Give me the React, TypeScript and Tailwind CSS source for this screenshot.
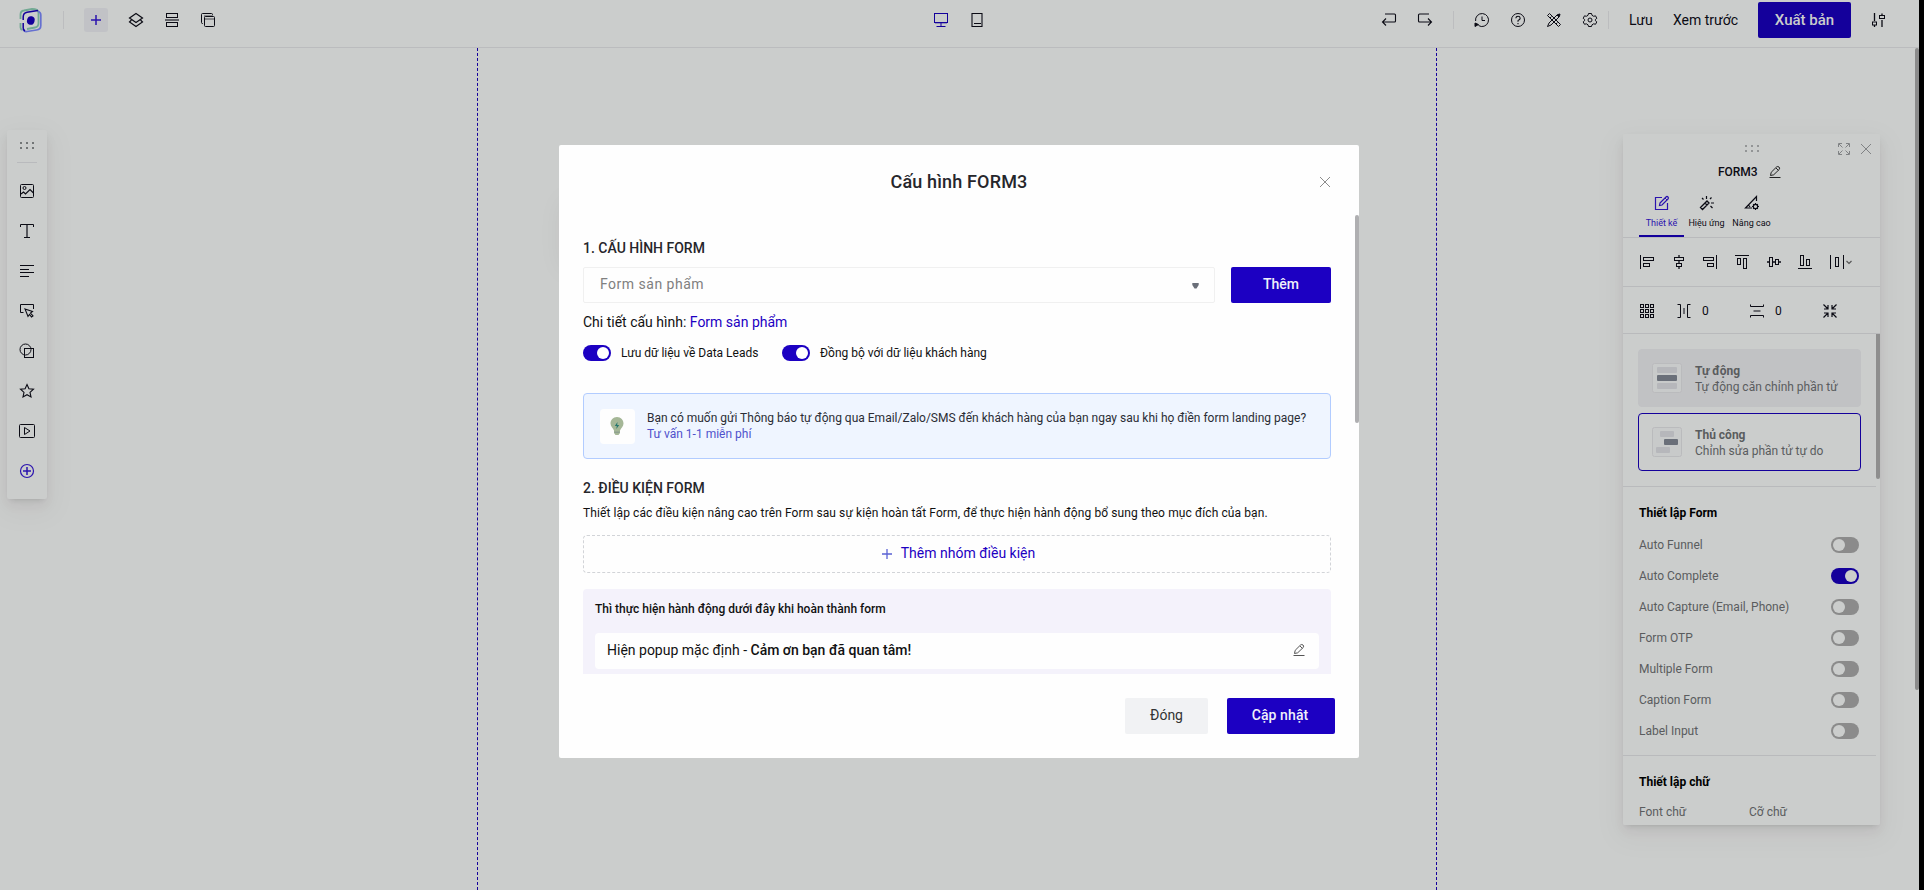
import React from "react";

type IconProps = { children: React.ReactNode; className?: string; size?: number };

function Icon({ children, className = "", size = 16 }: IconProps) {
  return (
    <svg
      width={size}
      height={size}
      viewBox={`0 0 ${size} ${size}`}
      fill="none"
      stroke="currentColor"
      strokeWidth={1}
      className={`block shrink-0 ${className}`}
    >
      {children}
    </svg>
  );
}

const Logo = () => (
  <svg width="24" height="26" viewBox="0 0 24 26" fill="none" className="block shrink-0">
    <path d="M2.500 12V7.500Q2.500 4 6 3.500L14 2Q20 2 20.500 5.500V16Q20.500 20 17 20.500L9 22" stroke="#72a993" strokeWidth="1.800" />
    <path d="M2.500 16V20.500Q2.500 22.500 4.500 23" stroke="#72a993" strokeWidth="1.800" />
    <path d="M5.500 22Q5.500 25 9 24.500L18.500 23Q22.800 22.500 22.800 18.500V8Q22.800 5 20 4.200" stroke="#6670d0" strokeWidth="1.700" />
    <path d="M20 3.500L9 5.200Q5.200 6 5.200 10V13M5.200 16V21Q5.200 23 7 24" stroke="#14009b" strokeWidth="1.500" />
    <ellipse cx="12.800" cy="13.500" rx="3.800" ry="4.300" fill="#14009b" transform="rotate(15 12.800 13.500)" />
  </svg>
);

const Layers = () => (
  <Icon>
    <path d="M8 1.500L14.500 6L8 10.500L1.500 6Z" strokeWidth="1.200" />
    <path d="M3.500 8L1.500 10L8 14.500L14.500 10L12.500 8" strokeWidth="1.200" />
  </Icon>
);
const Sections = () => (
  <Icon>
    <rect x="2.500" y="1.500" width="11" height="4" />
    <path d="M1 8H15" strokeWidth="2" strokeOpacity=".55" />
    <rect x="2.500" y="10.500" width="11" height="4" />
  </Icon>
);
const Windows = () => (
  <Icon>
    <path d="M3 11.500H2.500Q1.500 11.500 1.500 10.500V2.500Q1.500 1.500 2.500 1.500H11.500Q12.500 1.500 12.500 2.500V3" />
    <rect x="4.500" y="4.500" width="10" height="10" rx="1" />
    <path d="M4 7H14.500" strokeOpacity=".7" />
    <path d="M4 4H13" strokeOpacity=".7" />
  </Icon>
);
const Monitor = () => (
  <Icon>
    <rect x="1.500" y="1.500" width="13" height="9" />
    <path d="M8 11V14M3.500 14.500H12.500" />
    <path d="M2 11.500H14" strokeOpacity=".3" />
  </Icon>
);
const Tablet = () => (
  <Icon>
    <path d="M3 1V15M13 1V15" strokeWidth="2" strokeOpacity=".55" />
    <path d="M3 1.500H13M3 14.500H13M5 11.500H12" />
  </Icon>
);
const Undo = () => (
  <Icon>
    <path d="M4 2H13.500Q14.500 2 14.500 3V9Q14.500 10 13.500 10H1.500M5 6.500L1.500 10L5 13.500" strokeWidth="1.100" />
  </Icon>
);
const Redo = () => (
  <Icon>
    <path d="M12 2H2.500Q1.500 2 1.500 3V9Q1.500 10 2.500 10H14.500M11 6.500L14.500 10L11 13.500" strokeWidth="1.100" />
  </Icon>
);
const History = () => (
  <Icon>
    <path d="M1.600 9A6.500 6.500 0 1 1 4.500 13.500" />
    <path d="M1 14.500V11L4.500 12.500Z" fill="currentColor" />
    <path d="M8 4.500V8.500H11" />
  </Icon>
);
const Help = () => (
  <Icon>
    <circle cx="8" cy="8" r="6.500" />
    <path d="M5.800 6.300Q6 4.300 8 4.300T10.200 6.200Q10.200 7.300 8 8.600V9.800M8 11V12.200" strokeWidth="1.100" />
  </Icon>
);
const Tools = () => (
  <Icon>
    <path d="M1.500 3.500L3.500 1.500L14.500 12.500L12.500 14.500Z" />
    <path d="M11 3L13 5L5 13L1.500 14.500L3 11Z" />
    <path d="M12 2.500L14 2L13.500 4L13 5L11 3Z" fill="currentColor" />
    <path d="M4 6L5.500 4.500M10 12L11.500 10.500" />
  </Icon>
);
const Gear = () => (
  <Icon>
    <path d="M6.500 1.500H9.500L10 3.300L11.700 4.300L13.500 3.800L14.800 6.300L13.400 7.500V8.700L14.800 9.900L13.500 12.300L11.700 11.800L10 12.800L9.500 14.500H6.500L6 12.800L4.300 11.800L2.500 12.300L1.200 9.900L2.600 8.700V7.500L1.200 6.300L2.500 3.800L4.300 4.300L6 3.300Z" />
    <circle cx="8" cy="8" r="2" />
  </Icon>
);
const Tuner = () => (
  <Icon>
    <path d="M4.500 1V9M12 3V1.500M12 8V15M4.500 13V15" strokeWidth="1.300" />
    <rect x="2.500" y="10" width="4" height="3" />
    <rect x="9.500" y="3.500" width="5" height="3" />
  </Icon>
);
const ImageIcon = () => (
  <Icon>
    <rect x="1.500" y="1.500" width="13" height="13" rx="1" />
    <circle cx="5.500" cy="5" r="1.500" />
    <path d="M2 11L4.500 9L6.500 11L11 6.500L14.500 10" strokeWidth="1.200" />
  </Icon>
);
const TextIcon = () => (
  <Icon>
    <path d="M1.500 4V1.500H14.500V4M5 14.500H11" />
    <path d="M8 2V14" strokeWidth="2" strokeOpacity=".6" />
  </Icon>
);
const Paragraph = () => (
  <Icon>
    <path d="M1 2.500H15M1 6.500H10M1 9.500H15M1 13.500H10" />
  </Icon>
);
const ButtonIcon = () => (
  <Icon>
    <path d="M4.500 9.500H1.500V1.500H14.500V6" />
    <path d="M6 6L13.500 8.500L11.500 10L14 13L12.500 14L10.500 11.500L9 13.500Z" strokeWidth="1.100" />
  </Icon>
);
const Shapes = () => (
  <Icon>
    <circle cx="6.500" cy="6.500" r="5.500" />
    <rect x="5.500" y="5.500" width="9" height="9" />
  </Icon>
);
const StarIcon = () => (
  <Icon>
    <path d="M8 1.500L9.900 5.800L14.500 6.200L11 9.400L12 14L8 11.700L4 14L5 9.400L1.500 6.200L6.100 5.800Z" strokeWidth="1.100" />
  </Icon>
);
const VideoIcon = () => (
  <Icon>
    <rect x=".5" y="1.500" width="15" height="13" rx="1" />
    <path d="M5.500 4.500L11 8L5.500 11.500Z" />
  </Icon>
);
const AddCircle = () => (
  <Icon>
    <circle cx="8" cy="8" r="6.500" strokeWidth="1.200" />
    <path d="M8 4V12M4 8H12" strokeWidth="1.500" />
  </Icon>
);
const Pencil = () => (
  <Icon size={14}>
    <path d="M3.200 7.300L8.500 2Q9.800 1 11 2T11.200 4.500L5.700 9.800L2.500 10.500ZM8 3L10.300 5.300" />
    <path d="M1.500 12.500H12.500" />
  </Icon>
);
const DesignIcon = () => (
  <Icon>
    <path d="M8 2.500H1.500V14.500H13.500V8" strokeWidth="1.200" />
    <path d="M6 8L12 2Q13 1 14 2T14 4L8 10L5.500 10.500Z" strokeWidth="1.200" />
    <path d="M11 3L13 5" />
  </Icon>
);
const WandIcon = () => (
  <Icon>
    <path d="M1.500 12.500L8 6L10 8L3.500 14.500ZM6 8L8 10" strokeWidth="1.300" />
    <path d="M7.500 1V4M12.500 2.500L11 4M3 3L4.500 4.500M12 8H15M11.500 11L13.500 13" strokeWidth="1.200" />
  </Icon>
);
const AdvancedIcon = () => (
  <Icon>
    <path d="M8 13H1.500L12.500 1.500V6M4.500 10L6 12" strokeWidth="1.200" />
    <circle cx="11.500" cy="11.500" r="2.200" strokeWidth="1.200" />
    <path d="M11.500 8V9.500M11.500 13.500V15M8 11.500H9.300M13.700 11.500H15M9.200 9.200L10 10M13.800 9.200L13 10M9.200 13.800L10 13M13.800 13.800L13 13" strokeWidth="1.200" />
  </Icon>
);

const AlignLeft = () => (
  <Icon>
    <path d="M1.500 1V15" />
    <rect x="4.500" y="3.500" width="10" height="3" />
    <rect x="4.500" y="9.500" width="6" height="3" />
  </Icon>
);
const AlignCenterH = () => (
  <Icon>
    <path d="M8 1V4M8 6V10M8 12V15" strokeWidth="1.300" />
    <rect x="3.500" y="3.500" width="9" height="3" />
    <rect x="5.500" y="9.500" width="5" height="3" />
  </Icon>
);
const AlignRight = () => (
  <Icon>
    <path d="M14.500 1V15" />
    <rect x="1.500" y="3.500" width="10" height="3" />
    <rect x="5.500" y="9.500" width="6" height="3" />
  </Icon>
);
const AlignTop = () => (
  <Icon>
    <path d="M1 1.500H15" />
    <rect x="3.500" y="4.500" width="3" height="6" />
    <rect x="9.500" y="4.500" width="3" height="10" />
  </Icon>
);
const AlignMiddle = () => (
  <Icon>
    <path d="M1 8H4M6 8H10M12 8H15" strokeWidth="1.300" />
    <rect x="3.500" y="3.500" width="3" height="9" />
    <rect x="9.500" y="5.500" width="3" height="5" />
  </Icon>
);
const AlignBottom = () => (
  <Icon>
    <path d="M1 14.500H15" />
    <rect x="3.500" y="1.500" width="3" height="10" />
    <rect x="9.500" y="5.500" width="3" height="6" />
  </Icon>
);
const Distribute = () => (
  <Icon>
    <path d="M1.500 1V15M14.500 1V15" />
    <rect x="6.500" y="3.500" width="3" height="9" />
  </Icon>
);
const GridIcon = () => (
  <Icon>
    {[1.5, 6.5, 11.5].map((y) =>
      [1.5, 6.5, 11.5].map((x) => <rect key={`${x}-${y}`} x={x} y={y} width="3" height="3" />)
    )}
  </Icon>
);
const GapH = () => (
  <Icon>
    <path d="M1.500 1.500H4.500V14.500H1.500M14.500 1.500H11.500V14.500H14.500M8 5V11" />
  </Icon>
);
const GapV = () => (
  <Icon>
    <path d="M1.500 1.500V3.500H14.500V1.500M1.500 14.500V12.500H14.500V14.500M4.500 8H11.500" />
  </Icon>
);
const Collapse = () => (
  <Icon>
    <path
      d="M1.500 1.500L6 6M6 2V6H2M14.500 1.500L10 6M10 2V6H14M1.500 14.500L6 10M6 14V10H2M14.500 14.500L10 10M10 14V10H14"
      strokeWidth="1.200"
    />
  </Icon>
);
const Expand = () => (
  <Icon size={12}>
    <path d="M.5 4V.5H4M1 1L4.500 4.500M8 .5H11.500V4M11 1L7.500 4.500M.5 8V11.500H4M1 11L4.500 7.500M8 11.500H11.500V8M11 11L7.500 7.500" />
  </Icon>
);
const Close = () => (
  <Icon size={12}>
    <path d="M1 1L11 11M11 1L1 11" />
  </Icon>
);

function DragDots() {
  return (
    <div className="grid w-[14px] grid-cols-3 gap-x-1 gap-y-[3px]">
      {[0, 1, 2, 3, 4, 5].map((i) => (
        <span key={i} className="size-[2px] rounded-[1px] bg-current" />
      ))}
    </div>
  );
}

function Toggle({ on = false, dim = false }: { on?: boolean; dim?: boolean }) {
  const track = on ? (dim ? "bg-[#14009b] justify-end" : "bg-[#1c00c2] justify-end") : "bg-[#8b8b8b] justify-start";
  return (
    <span className={`flex h-4 w-7 shrink-0 items-center rounded-full px-[2px] ${track}`}>
      <span className={`size-3 rounded-full ${dim ? "bg-[#cbcdcc]" : "bg-white"}`} />
    </span>
  );
}

const Divider = () => <span className="h-[18px] w-px shrink-0 bg-[#bcbdbf]" />;

function TopBar() {
  return (
    <header className="flex h-12 items-start border-b border-[#bbbcbe] text-[#0b0b14]">
      <div className="flex h-10 w-[940px] items-center pl-[18px]">
        <Logo />
        <span className="w-[21px]" />
        <Divider />
        <div className="ml-5 flex items-center gap-5">
          <span className="flex size-6 items-center justify-center rounded-[3px] bg-[#c1c2c6] text-[#2b13ae]">
            <Icon size={10}>
              <path d="M5 0V10M0 5H10" strokeWidth="1.500" />
            </Icon>
          </span>
          <Layers />
          <Sections />
          <Windows />
        </div>
      </div>
      <div className="-ml-[7px] flex h-10 w-[448px] items-center gap-5">
        <span className="text-[#14009b]">
          <Monitor />
        </span>
        <Tablet />
      </div>
      <div className="flex h-10 items-center">
        <div className="flex items-center gap-5">
          <Undo />
          <Redo />
          <Divider />
          <History />
          <Help />
          <Tools />
          <Gear />
        </div>
        <span className="w-[10px]" />
        <Divider />
        <span className="ml-[20px] w-[44px] pb-px text-sm">Lưu</span>
        <span className="w-[85px] pb-px text-sm">Xem trước</span>
        <span className="flex h-9 w-[93px] items-center justify-center rounded-[2px] bg-[#14009b] text-[15px] font-medium text-[#cbcdcc]">
          Xuất bản
        </span>
        <span className="ml-[19px]">
          <Tuner />
        </span>
      </div>
    </header>
  );
}

function ToolRail() {
  return (
    <aside className="absolute left-[7px] top-[130px] flex h-[369px] w-10 flex-col items-center rounded-[2px] bg-[#cbcdcc] pt-[12px] text-[#0b0b14] shadow-[0_3px_6px_-4px_rgba(0,0,0,0.2),0_6px_12px_0_rgba(0,0,0,0.06),0_9px_28px_8px_rgba(60,0,20,0.03)]">
      <span className="text-[#55575a]">
        <DragDots />
      </span>
      <span className="mt-[13px] h-px w-5 bg-[#b9babd]" />
      <div className="mt-5 flex flex-col gap-6">
        <ImageIcon />
        <TextIcon />
        <Paragraph />
        <ButtonIcon />
        <Shapes />
        <StarIcon />
        <VideoIcon />
        <span className="text-[#2b13ae]">
          <AddCircle />
        </span>
      </div>
    </aside>
  );
}

const formSettings = [
  { label: "Auto Funnel", on: false },
  { label: "Auto Complete", on: true },
  { label: "Auto Capture (Email, Phone)", on: false },
  { label: "Form OTP", on: false },
  { label: "Multiple Form", on: false },
  { label: "Caption Form", on: false },
  { label: "Label Input", on: false },
];

function ModeCard({ title, text, manual = false }: { title: string; text: string; manual?: boolean }) {
  return (
    <div
      className={`flex h-[58px] w-[223px] items-center rounded border pl-[13px] ${
        manual ? "border-[#14009b]" : "border-[#c1c2c4] bg-[#c1c2c4]"
      }`}
    >
      <svg width="30" height="30" viewBox="0 0 30 30" fill="none" className="shrink-0">
        <rect x=".5" y=".5" width="29" height="29" rx="2" stroke="#babbbd" fill="#c8caca" />
        {manual ? (
          <>
            <rect x="8" y="4" width="14" height="6" rx="1" fill="#b6b7bb" />
            <rect x="12" y="12" width="14" height="6" rx="1" fill="#6a6f79" />
            <rect x="4" y="20" width="14" height="6" rx="1" fill="#b6b7bb" />
          </>
        ) : (
          <>
            <rect x="5" y="4" width="20" height="6" rx="1" fill="#b6b7bb" />
            <rect x="5" y="12" width="20" height="6" rx="1" fill="#6a6f79" />
            <rect x="5" y="20" width="20" height="6" rx="1" fill="#b6b7bb" />
          </>
        )}
      </svg>
      <div className="ml-[13px] pt-[2px] text-xs leading-4 text-[#5a5c5e]">
        <div className="font-bold">{title}</div>
        <div>{text}</div>
      </div>
    </div>
  );
}

function PropertiesPanel() {
  return (
    <aside className="absolute left-[1623px] top-[134px] flex h-[691px] w-[257px] flex-col overflow-hidden rounded-[2px] bg-[#cbcdcc] text-[#0b0b14]">
      <div className="flex h-[29px] items-center">
        <div className="ml-[122px] text-[#808284]">
          <DragDots />
        </div>
        <div className="ml-[79px] flex items-center gap-[10px] text-[#808284]">
          <Expand />
          <Close />
        </div>
      </div>
      <div className="flex h-[18px] items-center pl-[95px]">
        <span className="w-[50px] text-xs font-medium tracking-[-0.05px]">FORM3</span>
        <span className="text-[#222]">
          <Pencil />
        </span>
      </div>
      <nav className="flex h-[57px] border-b border-[#b9babc] pl-4 text-[9px] leading-3">
        <div className="flex w-[45px] flex-col items-center border-b-2 border-[#14009b] pt-[14px] text-[#2b13ae]">
          <DesignIcon />
          <span className="mt-[6px] whitespace-nowrap">Thiết kế</span>
        </div>
        <div className="flex w-[45px] flex-col items-center pt-[14px]">
          <WandIcon />
          <span className="mt-[6px] whitespace-nowrap">Hiệu ứng</span>
        </div>
        <div className="flex w-[45px] flex-col items-center pt-[14px]">
          <AdvancedIcon />
          <span className="mt-[6px] whitespace-nowrap">Nâng cao</span>
        </div>
      </nav>
      <div className="flex h-[49px] items-center justify-between border-b border-[#b9babc] pl-4 pr-[27px]">
        <AlignLeft />
        <AlignCenterH />
        <AlignRight />
        <AlignTop />
        <AlignMiddle />
        <AlignBottom />
        <span className="flex items-center">
          <Distribute />
          <Icon size={8} className="text-[#555]">
            <path d="M1.500 3L4 5.500L6.500 3" strokeWidth="1.200" />
          </Icon>
        </span>
      </div>
      <div className="flex h-[47px] shrink-0 items-center border-b border-[#b9babc] pl-4 pt-[2px] text-xs">
        <GridIcon />
        <span className="ml-[21px]">
          <GapH />
        </span>
        <span className="ml-[10px] w-[47px]">0</span>
        <GapV />
        <span className="ml-[10px] w-[47px]">0</span>
        <Collapse />
      </div>
      <div className="flex min-h-0 flex-1 overflow-hidden">
        <div className="w-[253px] shrink-0">
          <div className="flex h-[153px] flex-col gap-[6px] border-b border-[#b9babc] pl-[15px] pt-[15px]">
            <ModeCard title="Tự động" text="Tự động căn chỉnh phần tử" />
            <ModeCard title="Thủ công" text="Chỉnh sửa phần tử tự do" manual />
          </div>
          <section className="h-[269px] border-b border-[#b9babc] pl-4 pr-[17px] pt-[10px]">
            <h3 className="flex h-8 items-center text-xs font-bold text-black">Thiết lập Form</h3>
            {formSettings.map((item) => (
              <div key={item.label} className="flex h-[31px] items-center justify-between text-xs text-[#5a5c5e]">
                <span>{item.label}</span>
                <Toggle on={item.on} dim />
              </div>
            ))}
          </section>
          <section className="pl-4 pt-[10px]">
            <h3 className="flex h-8 items-center text-xs font-bold text-black">Thiết lập chữ</h3>
            <div className="flex h-7 items-center text-xs text-[#5a5c5e]">
              <span className="w-[110px]">Font chữ</span>
              <span>Cỡ chữ</span>
            </div>
          </section>
        </div>
        <div className="h-[145px] w-1 rounded-b-[2px] bg-[#8e8e8e]" />
      </div>
    </aside>
  );
}

function ConfigModal() {
  return (
    <div className="absolute left-[559px] top-[145px] flex h-[613px] w-[800px] flex-col rounded-[2px] bg-[#fefefe]">
      <div className="flex h-[70px] shrink-0 items-center pt-[3px]">
        <h2 className="w-[760px] pl-10 text-center text-lg font-medium tracking-[0.15px] text-[#26262b]">
          Cấu hình FORM3
        </h2>
        <span className="text-[#8c8c8c]">
          <Close />
        </span>
      </div>
      <div className="flex h-[459px] shrink-0 overflow-hidden">
        <div className="w-[796px] shrink-0 pl-6 pr-6 pt-[22px]">
          <h3 className="h-[30px] text-sm font-medium leading-[23px] text-[#26262b]">1. CẤU HÌNH FORM</h3>
          <div className="flex h-9 w-[748px] gap-4">
            <div className="flex h-9 w-[632px] items-center justify-between rounded-[2px] border border-[#f0f0f0] pl-4 pr-[15px] text-sm tracking-[0.5px] text-[#808080]">
              <span className="-mt-[2px]">Form sản phẩm</span>
              <svg width="7" height="6" viewBox="0 0 7 6" className="mt-[2px]">
                <path d="M.3 0H6.700V2L4.500 5.500H2.500L.3 2Z" fill="#6a6f79" />
              </svg>
            </div>
            <button className="h-9 w-[100px] rounded-[2px] bg-[#1c00c2] pb-[2px] text-sm font-medium text-[#f0f0fa]">
              Thêm
            </button>
          </div>
          <p className="mt-[8px] h-[22px] text-sm leading-[22px] text-[#111]">
            Chi tiết cấu hình: <a className="text-[#1c00c2]">Form sản phẩm</a>
          </p>
          <div className="mt-3 flex h-4 items-center text-xs text-[#111]">
            <Toggle on />
            <span className="ml-[10px] w-[161px]">Lưu dữ liệu về Data Leads</span>
            <Toggle on />
            <span className="ml-[10px]">Đồng bộ với dữ liệu khách hàng</span>
          </div>
          <div className="mt-8 flex h-[66px] w-[748px] items-center rounded border border-[#b2ccff] bg-[#eff5ff] pl-4 text-xs leading-4 text-[#2b2d35]">
            <span className="flex size-[35px] items-center justify-center rounded bg-[#fefefe]">
              <svg width="14" height="18" viewBox="0 0 14 18" fill="none" className="-ml-px">
                <path d="M7 0C3 0 .5 3 .5 6.500C.5 9.500 3 11 4 13.500V16L5.500 18H8.500L10 16V13.500C11 11 13.500 9.500 13.500 6.500C13.500 3 11 0 7 0Z" fill="#a5b797" />
                <path d="M4 14.500H10L9.500 16H4.500Z" fill="#8fa291" />
                <path d="M7.500 5L4.800 9H6.800L6.300 12L9.200 8H7.200Z" fill="#26766d" />
              </svg>
            </span>
            <div className="ml-3">
              <div>
                Bạn có muốn gửi Thông báo tự động qua Email/Zalo/SMS đến khách hàng của bạn ngay sau khi họ điền form
                landing page?
              </div>
              <a className="text-[#5052cc]">Tư vấn 1-1 miễn phí</a>
            </div>
          </div>
          <h3 className="mt-[18px] h-[22px] text-sm font-medium leading-[23px] text-[#26262b]">2. ĐIỀU KIỆN FORM</h3>
          <p className="mt-1 h-5 whitespace-nowrap text-xs leading-5 tracking-[0.1px] text-[#111]">
            Thiết lập các điều kiện nâng cao trên Form sau sự kiện hoàn tất Form, để thực hiện hành động bổ sung theo mục
            đích của bạn.
          </p>
          <div className="mt-3 flex h-[38px] w-[748px] items-center justify-center gap-[9px] rounded border border-dashed border-[#d2d4d8] pl-[3px] text-sm text-[#1c00c2]">
            <Icon size={10} className="text-[#5a62d4]">
              <path d="M5 0V10M0 5H10" strokeWidth="1.300" />
            </Icon>
            <span className="-mt-0.5">Thêm nhóm điều kiện</span>
          </div>
          <div className="mt-4 h-[120px] w-[748px] rounded bg-[#f4f2fb] px-3">
            <div className="h-11 pt-[10px] text-xs font-medium leading-5 text-[#111]">
              Thì thực hiện hành động dưới đây khi hoàn thành form
            </div>
            <div className="flex h-9 items-center justify-between rounded bg-[#fefefe] pl-3 pr-[13px] text-sm text-[#111]">
              <span className="-mt-[2px]">
                Hiện popup mặc định - <b className="font-medium">Cảm ơn bạn đã quan tâm!</b>
              </span>
              <span className="-mt-[2px] text-[#555]">
                <Pencil />
              </span>
            </div>
          </div>
        </div>
        <div className="h-[208px] w-1 rounded-[2px] bg-[#afafb1]" />
      </div>
      <div className="flex flex-1 items-start justify-end gap-[19px] pr-6 pt-6 text-sm">
        <button className="h-9 w-[83px] rounded-[2px] bg-[#f1f2f4] pb-[2px] text-[#333]">Đóng</button>
        <button className="h-9 w-[108px] rounded-[2px] bg-[#1c00c2] pb-[2px] pr-[2px] font-medium tracking-[0.1px] text-[#f0f0fa]">
          Cập nhật
        </button>
      </div>
    </div>
  );
}

export default function App() {
  return (
    <div className="relative flex h-[890px] w-[1924px] overflow-hidden bg-black font-['Roboto',sans-serif]">
      <div className="flex w-[1919px] shrink-0 flex-col bg-[#cbcdcc]">
        <TopBar />
        <main className="flex flex-1 justify-between">
          <div className="ml-[477px] w-[960px] border-x border-dashed border-[#14009b]" />
          <div className="h-[642px] w-1 rounded-[2px] bg-[#8b8b8b]" />
        </main>
      </div>
      <div className="absolute left-[572px] top-[210px] h-[50px] w-10 shadow-[0_0_28px_10px_rgba(60,0,20,0.05)]" />
      <ToolRail />
      <div className="absolute left-[1623px] top-[134px] h-[691px] w-[257px] rounded-[2px] shadow-[0_3px_6px_-4px_rgba(0,0,0,0.2),0_6px_12px_0_rgba(0,0,0,0.06),0_9px_28px_8px_rgba(60,0,20,0.03)]" />
      <PropertiesPanel />
      <ConfigModal />
    </div>
  );
}
